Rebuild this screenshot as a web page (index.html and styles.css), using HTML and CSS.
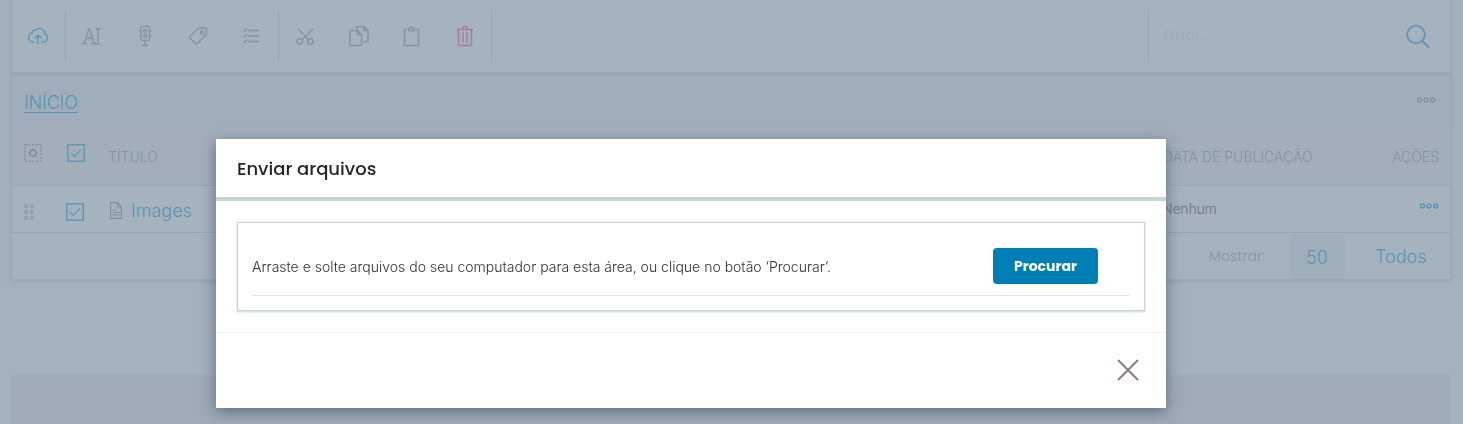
FILE: index.html
```html
<!DOCTYPE html>
<html lang="pt-BR">
<head>
<meta charset="utf-8">
<title>Enviar arquivos</title>
<link rel="stylesheet" href="styles.css">
</head>
<body>
<main class="page">
  <section class="panel">
    <div class="toolbar">
      <div class="group group-first">
        <span class="tool blue"><svg width="22" height="22" viewBox="0 0 22 22"><path d="M7.5 17H6a4.6 4.6 0 0 1-1-9 3.2 3.2 0 0 1 4-3 5.4 5.4 0 0 1 9 4 4.2 4.2 0 0 1-2 8h-1.5M11 19v-9M7.7 13.2 11 10l3.300 3.200"/></svg></span>
      </div>
      <div class="group">
        <span class="tool"><svg width="20" height="22" viewBox="0 0 20 22"><path class="thin" d="M2.500 18 6.800 4h.8L12 18M4 13.300h7M0 18.500h5M9 18.500h5M16 3.500v16M13.500 3.500q2 0 2.500 1 .5-1 2.500-1M13.500 19.500q2 0 2.500-1 .5 1 2.500 1"/></svg></span>
        <span class="tool"><svg width="14" height="22" viewBox="0 0 14 22"><rect x="3" y="1.500" width="8.500" height="14" rx="1.500"/><circle cx="7.200" cy="6" r="1.600"/><circle cx="7.200" cy="11" r="1.600"/><path d="M3 6H1M3 11H1M11.500 6h2M11.500 11h2M7.200 15.500v5M4.500 20.500h5.500"/></svg></span>
        <span class="tool"><svg width="20" height="22" viewBox="0 0 20 22"><path d="M11 3h6q1.500 0 1.500 1.500v5L9.500 18.500q-1 1-2 0L2 13q-1-1 0-2Z"/><circle cx="14" cy="7.500" r="1.500"/></svg></span>
        <span class="tool"><svg width="18" height="22" viewBox="0 0 18 22"><path d="M6.500 5.500h10.500M6.500 11h10.500M6.500 16.500h10.500M1.500 5.500l1 1 2.500-3M1.500 11l1 1 2.500-3M1.500 16.500l1 1 2.500-3"/></svg></span>
      </div>
      <div class="group">
        <span class="tool"><svg width="18" height="22" viewBox="0 0 18 22"><path d="M2 4l11 11M17 4 6 15"/><circle cx="3.800" cy="16.500" r="2.700"/><circle cx="14.500" cy="16.500" r="2.700"/></svg></span>
        <span class="tool copy"><svg width="20" height="22" viewBox="0 0 20 22"><path d="M8 4.500v-3h7l4 4v11h-5M15 1.500v4h4M1 5.500h7.500l4 4v11H1ZM8.500 5.500v4h4"/></svg></span>
        <span class="tool"><svg width="16" height="22" viewBox="0 0 16 22"><path d="M3.500 4.500H1.500v16h14v-16h-2M5.500 5.500v-2h1.500q1.500-3 3 0h1.500v2Z"/></svg></span>
        <span class="tool pink"><svg width="18" height="22" viewBox="0 0 18 22"><path d="M1 4.500h16M2.500 4.500v14.500q0 1.500 1.500 1.500h10q1.500 0 1.500-1.500V4.500M6.500 4q0-2.500 2.500-2.500T11.500 4M7 7.500v10M11 7.500v10"/></svg></span>
      </div>
      <div class="filter">
        <span>Filtrar...</span>
        <svg class="search" width="26" height="26" viewBox="0 0 26 26"><circle cx="11" cy="10.500" r="8.800"/><path d="m17.300 17 7 7"/></svg>
      </div>
    </div>

    <div class="crumbs">
      <a>INÍCIO</a>
      <svg class="dots" width="20" height="8" viewBox="0 0 20 8"><circle cx="3.500" cy="4" r="2"/><circle cx="10" cy="4" r="2"/><circle cx="16.700" cy="4" r="2"/></svg>
    </div>

    <div class="row head">
      <svg class="gear" width="18" height="18" viewBox="0 0 18 18"><rect class="dotted" x=".8" y=".8" width="16.400" height="16.400"/><circle cx="9" cy="9" r="3"/><path d="M9 4.500V6M9 12v1.500M4.500 9H6M12 9h1.500M5.800 5.800l1 1M11.200 11.200l1 1M12.200 5.800l-1 1M6.800 11.200l-1 1"/></svg>
      <svg class="check" width="18" height="18" viewBox="0 0 18 18"><rect x=".75" y=".75" width="16.500" height="16.500"/><path class="tick" d="m4 9 3.500 3.500L14 5.500"/></svg>
      <span class="title">TÍTULO</span>
      <span class="date">DATA DE PUBLICAÇÃO</span>
      <span class="actions">AÇÕES</span>
    </div>

    <div class="row item">
      <svg class="grip" width="10" height="16" viewBox="0 0 10 16"><circle cx="2" cy="2.300" r="1.600"/><circle cx="8" cy="2.300" r="1.600"/><circle cx="2" cy="8" r="1.600"/><circle cx="8" cy="8" r="1.600"/><circle cx="2" cy="13.700" r="1.600"/><circle cx="8" cy="13.700" r="1.600"/></svg>
      <svg class="check" width="18" height="18" viewBox="0 0 18 18"><rect x=".75" y=".75" width="16.500" height="16.500"/><path class="tick" d="m4 9 3.500 3.500L14 5.500"/></svg>
      <svg class="doc" width="12" height="17" viewBox="0 0 12 17"><path d="M.6.600h7L11.400 5v11.400H.6ZM7.500.600V5h4M2.500 8h4M2.500 10.500h7.500M2.500 13h7.500"/></svg>
      <span class="name">Images</span>
      <span class="date">Nenhum</span>
      <svg class="dots blue" width="20" height="8" viewBox="0 0 20 8"><circle cx="3.500" cy="4" r="2"/><circle cx="10" cy="4" r="2"/><circle cx="16.700" cy="4" r="2"/></svg>
    </div>

    <div class="pager">
      <span class="show">Mostrar:</span>
      <span class="size current">50</span>
      <span class="size all">Todos</span>
    </div>
  </section>
  <footer class="footer"></footer>
</main>

<div class="modal" role="dialog">
  <h2 class="modal-title">Enviar arquivos</h2>
  <div class="modal-body">
    <div class="drop">
      <div class="drop-row">
        <p>Arraste e solte arquivos do seu computador para esta área, ou clique no botão ‘Procurar’.</p>
        <button class="browse">Procurar</button>
      </div>
    </div>
  </div>
  <div class="modal-foot">
    <svg class="close" width="22" height="22" viewBox="0 0 22 22"><path d="M1 1l20 20M21 1 1 21"/></svg>
  </div>
</div>
</body>
</html>
```
FILE: styles.css
```css
* { box-sizing: border-box; }
body {
  margin: 0;
  height: 424px;
  overflow: hidden;
  background: #a4b2bd;
  font: 300 14px/20px Inter, sans-serif;
  color: #6f7f8b;
}
svg { display: block; flex: none; fill: none; stroke: currentColor; stroke-width: 1.4; overflow: visible; }
.page { height: 424px; padding: 0 12px 0 11px; display: flex; flex-direction: column; }
.panel {
  height: 281px;
  flex: none;
  border: solid #96a9b6;
  border-width: 0 1px 2px;
  box-shadow: 0 0 5px rgba(110, 135, 150, .35);
  background: #a5b3be;
}
.toolbar { height: 76px; padding-top: 10px; display: flex; border-bottom: 4px solid #94a8b7; }
.group { height: 52px; display: flex; align-items: center; border-right: 1px solid #93a6b4; }
.group-first { width: 54px; }
.tool { width: 53px; padding-right: 2px; display: flex; justify-content: center; color: #8793a0; }
.tool.copy { padding-right: 0; }
.tool svg { stroke-width: 1.5; }
.tool .thin { stroke-width: 1.4; }
.tool.blue, .blue { color: #6398b5; }
.tool.pink { color: #a87ba0; padding-right: 0; }
.filter {
  width: 302px;
  height: 52px;
  margin-left: auto;
  padding: 0 19px 0 14px;
  display: flex;
  align-items: center;
  justify-content: space-between;
  border-left: 1px solid #93a6b4;
  color: #99abb9;
  font-family: Poppins, sans-serif;
  font-size: 13.5px;
}
.search { color: #5c96b6; stroke-width: 1.8; margin-top: 2px; }
.crumbs {
  height: 52px;
  padding: 0 14px 3px 12px;
  display: flex;
  align-items: center;
  justify-content: space-between;
  background: #a0aebb;
}
.crumbs a { font-size: 18px; line-height: 18px; padding-top: 2px; letter-spacing: -.15px; margin-top: 4px; color: #5893b2; border-bottom: 1px solid #5893b2; }
.dots { color: #84909d; stroke-width: 1.5; margin-top: -2px; }
.dots.blue { color: #5893b2; margin: -6px 0 0 auto; }
.row { display: flex; align-items: center; padding-left: 12px; }
.head { height: 58px; padding-right: 11px; background: #a2afbb; border-bottom: 1px solid #98a9b6; color: #84939f; }
.gear { color: #84909c; margin-bottom: 8px; }
.dotted { stroke-dasharray: 2 1.600; }
.check { color: #6499b5; stroke-width: 1.6; }
.head .check { margin: 0 24px 8px 25px; }
.head .title { width: 1055px; margin-left: -1px; }
.tick { stroke-width: 1.300; }
.head .actions { margin-left: auto; }
.item { height: 47px; padding-right: 11px; border-bottom: 1px solid #94a6b3; }
.grip { color: #8793a0; stroke-width: 1; margin-top: 5px; }
.item .check { margin: 5px 26px 0 32px; }
.item .grip + .check { margin-left: 32px; }
.doc { color: #82909c; stroke-width: 1.200; margin-top: 3px; }
.name { width: 1031px; margin-left: 9px; margin-top: 4px; color: #5893b2; font-size: 18px; }
.item .date { color: #66737e; letter-spacing: -.2px; }
.pager { height: 46px; display: flex; justify-content: flex-end; align-items: center; font-family: Poppins, sans-serif; }
.show { color: #84939f; margin-right: 24px; letter-spacing: .1px; }
.size { font: 18px Inter, sans-serif; font-weight: 300; color: #5893b2; }
.current { width: 56px; height: 45px; line-height: 47px; text-align: center; border-radius: 3px; background: #a0afbc; }
.all { width: 105px; padding-left: 30px; padding-top: 1px; }
.footer { flex: 1; margin-top: 94px; background: #9facb7; }

.modal {
  position: fixed;
  left: 216px;
  top: 139px;
  width: 950px;
  height: 269px;
  background: #fff;
  box-shadow: 0 4px 14px rgba(60, 75, 90, .65);
  color: #262626;
}
.modal-title {
  height: 62px;
  margin: 0;
  padding: 0 21px 0;
  border-bottom: 4px solid #c7d5d8;
  font: 500 18px/59px Poppins, sans-serif;
}
.modal-body { height: 132px; padding: 21px; border-bottom: 1px solid #edf0f0; }
.drop { height: 89px; padding: 14px; border: 1px solid #c7d5d8; box-shadow: 0 1px 2px #c7d5d8; }
.drop-row { height: 59px; padding: 0 32px 0 0; display: flex; justify-content: space-between; align-items: flex-end; border-bottom: 1px solid #e0e5e6; }
.drop-row p { margin: 0 0 18px; color: #303030; white-space: nowrap; }
.browse {
  width: 105px;
  height: 36px;
  margin: 0 0 11px;
  padding: 0;
  border: 0;
  border-radius: 4px;
  background: #007eb6;
  color: #fff;
  font: 700 14px/36px Poppins, sans-serif;
}
.modal-foot { height: 75px; padding: 0 27px 1px 0; display: flex; align-items: center; justify-content: flex-end; }
.close { color: #8c7b7e; stroke-width: 2; }
```
